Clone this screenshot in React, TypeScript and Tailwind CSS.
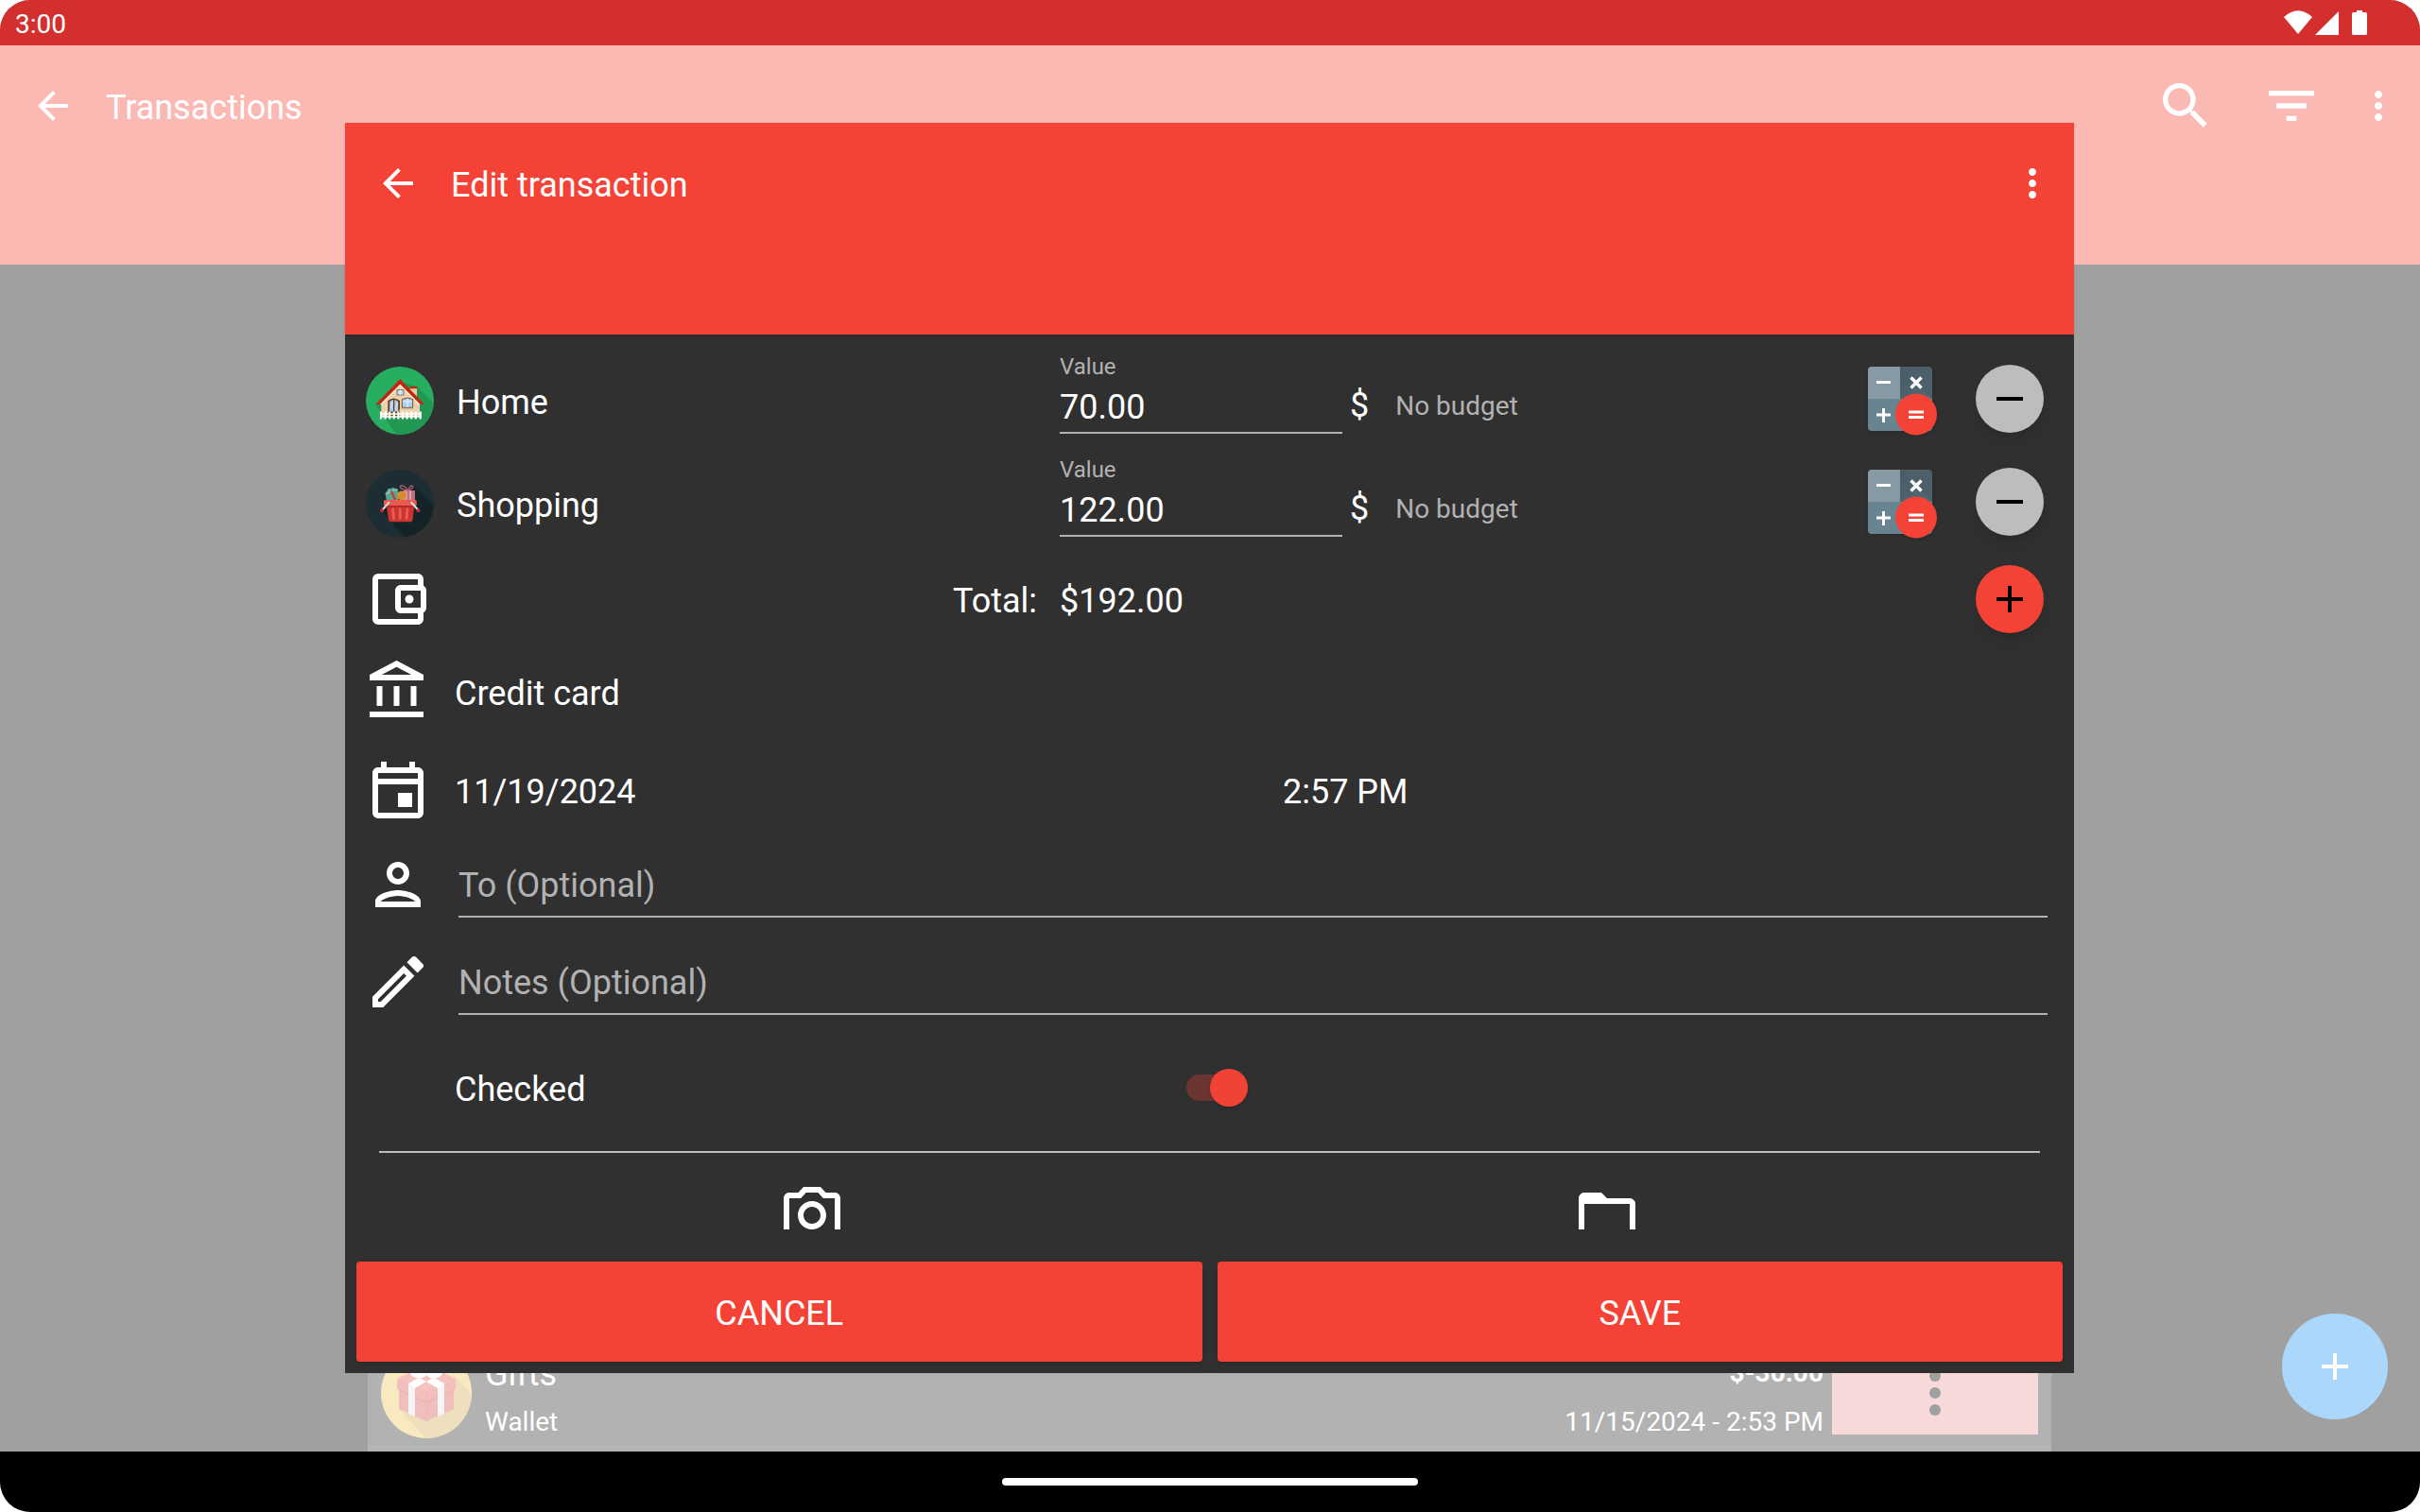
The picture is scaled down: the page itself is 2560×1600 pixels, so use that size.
import { useState } from "react";
import type { ReactNode } from "react";
import {
  MdArrowBack,
  MdFilterList,
  MdFolderOpen,
  MdMoreVert,
  MdOutlineAccountBalance,
  MdOutlineAccountBalanceWallet,
  MdOutlineEdit,
  MdOutlineEvent,
  MdOutlinePerson,
  MdOutlinePhotoCamera,
  MdSearch,
} from "react-icons/md";

function HouseIcon() {
  return (
    <svg viewBox="0 0 72 72" className="size-[72px] shrink-0" aria-hidden="true">
      <defs>
        <clipPath id="house-clip">
          <circle cx="36" cy="36" r="36" />
        </clipPath>
      </defs>
      <circle cx="36" cy="36" r="36" fill="#27ae60" />
      <path d="M54 21L76 43V76H35L10.500 40.500L36 16Z" fill="#229653" clipPath="url(#house-clip)" />
      <rect x="47" y="22" width="7" height="14" fill="#e3c9a4" />
      <rect x="46.500" y="21" width="8" height="2.200" fill="#c0280f" />
      <path d="M16.300 37L36.300 17L57 37V53H16.300Z" fill="#ead2ae" />
      <path d="M36.300 13L62 40H57.500L36.300 18.800L15 40H10.300Z" fill="#c0280f" />
      <path d="M36.300 18.800L57.500 40H55.500L36.300 21L17 40H15Z" fill="#f6ead6" />
      <rect x="33" y="24.500" width="7" height="5.500" fill="#bcdcf7" stroke="#7d5a3a" strokeWidth="0.800" />
      <path d="M36.500 24.500V30" stroke="#fff" strokeWidth="0.700" />
      <path d="M38.300 43.300V34.500Q44 31.500 49.700 34.500V43.300Z" fill="#a9cff2" stroke="#7a4a25" strokeWidth="1" />
      <path d="M44 33.500V43M38.800 37H49.200" stroke="#fff" strokeWidth="0.700" />
      <path d="M37.500 44.300H50.500" stroke="#cdb18a" strokeWidth="1" />
      <path d="M23.300 53V36Q29.700 31 36 36V53Z" fill="#6b3d17" />
      <path d="M25.200 47.500V37Q27 35.300 29 35V47.500ZM30.300 47.500V35Q32.500 35.300 34.200 37V47.500Z" fill="#a9cff2" />
      <path d="M26 44L28.500 38M31.200 45L33.600 38" stroke="#dcecfb" strokeWidth="0.900" />
      <circle cx="35" cy="46.500" r="0.800" fill="#f0c419" />
      <path d="M15 50H58.700M15 53H58.700" stroke="#fff" strokeWidth="1.400" />
      <path
        d="M16 55.500V47.500M20.600 55.500V47.500M25.200 55.500V47.500M29.800 55.500V47.500M34.400 55.500V47.500M39 55.500V47.500M43.600 55.500V47.500M48.200 55.500V47.500M52.800 55.500V47.500M57.700 55.500V47.500"
        stroke="#fff"
        strokeWidth="2.200"
      />
    </svg>
  );
}

function BasketIcon() {
  return (
    <svg viewBox="0 0 72 72" className="size-[72px] shrink-0" aria-hidden="true">
      <defs>
        <clipPath id="basket-clip">
          <circle cx="36" cy="36" r="36" />
        </clipPath>
      </defs>
      <circle cx="36" cy="36" r="36" fill="#1c2e33" />
      <path d="M51 18L76 43V76H45L17 44L30 30Z" fill="#142326" clipPath="url(#basket-clip)" />
      <path d="M20.500 25L24 20.500L29 19L33.500 21L35 26L34 33H22Z" fill="#5aa394" />
      <path d="M21 26L25 24L24 20.500M28 22L33.500 21" stroke="#8cc9bb" strokeWidth="1.400" fill="none" />
      <path d="M27 23L31 32" stroke="#c9393a" strokeWidth="2.200" />
      <rect x="40" y="22" width="12" height="11" fill="#b9707f" />
      <rect x="40" y="22" width="4" height="11" fill="#d9939d" />
      <path d="M47 22V33" stroke="#e9aeb5" strokeWidth="1.600" />
      <circle cx="37.800" cy="27.500" r="5" fill="#d68b2d" />
      <path d="M44.500 22C40 21.500 35.500 19.500 36.500 17.500S43 18 44.500 22C46 18 48.500 16 49.500 17.500S48 21.500 44.500 22" fill="none" stroke="#b75a72" strokeWidth="1.300" />
      <path d="M21.500 36H51.500L49.500 53Q49.200 55.300 47 55.300H26.500Q24.300 55.300 24 53Z" fill="#cc3333" />
      <path d="M19 33.500Q19 32 20.500 32H52Q53.700 32 53.700 33.500V38H19Z" fill="#e95b4f" />
      <path d="M21.500 38H51.300V39.600H21.700Z" fill="#a92629" />
      <path d="M28.500 42L29.500 51.500M36.200 42V51.500M44 42L43 51.500" stroke="#ea5d50" strokeWidth="2.800" strokeLinecap="round" />
      <path d="M24.300 34.800L17.500 42.500M48.300 34.800L55.200 42.500" stroke="#dfe3e3" strokeWidth="2" strokeLinecap="round" />
      <circle cx="17" cy="43.200" r="1.900" fill="#c9302f" />
      <circle cx="55.500" cy="43.200" r="1.900" fill="#c9302f" />
    </svg>
  );
}

function GiftIcon() {
  return (
    <svg viewBox="0 0 96 96" className="size-24 shrink-0" aria-hidden="true">
      <defs>
        <clipPath id="gift-clip">
          <circle cx="48" cy="48" r="48" />
        </clipPath>
      </defs>
      <circle cx="48" cy="48" r="48" fill="#f9e9c1" />
      <path d="M79 31L110 65V110H60L19 65L48 40Z" fill="#eee0bf" clipPath="url(#gift-clip)" />
      <path d="M19 40L48 52L77 40V65L48 78L19 65Z" fill="#f0bfbd" />
      <path d="M17 33L48 18L79 33V44L48 57L17 44Z" fill="#f6c2bf" />
      <path d="M17 33L48 47L79 33V44L48 57L17 44Z" fill="#f3bfbc" />
      <path d="M19 45L48 58L77 45" stroke="#e9b0ae" strokeWidth="1.200" fill="none" />
      <path d="M48 46V78" stroke="#ecb8b6" strokeWidth="1" />
      <path d="M29 38L36 42V73L29 70ZM60 42L67 38V70L60 73Z" fill="#f6f6f6" />
      <path d="M29 38L60 21L67 25L36 43ZM67 38L36 21L29 25L60 43Z" fill="#fff" />
      <ellipse cx="40" cy="25" rx="8" ry="6" fill="none" stroke="#fff" strokeWidth="3" />
      <ellipse cx="56" cy="25" rx="8" ry="6" fill="none" stroke="#fff" strokeWidth="3" />
    </svg>
  );
}

function CalculatorIcon() {
  return (
    <svg viewBox="0 0 76 76" className="size-[76px] drop-shadow-sm" aria-hidden="true">
      <defs>
        <clipPath id="calc-clip">
          <rect width="68" height="68" rx="4" />
        </clipPath>
        <linearGradient id="calc-fade" x1="0" y1="0" x2="1" y2="1">
          <stop offset="0" stopColor="#455a64" />
          <stop offset="1" stopColor="#546b77" />
        </linearGradient>
      </defs>
      <g clipPath="url(#calc-clip)">
        <rect width="34" height="34" fill="#8799a3" />
        <rect x="34" width="34" height="34" fill="#4d606a" />
        <path d="M34 0L68 34H34Z" fill="url(#calc-fade)" />
        <rect y="34" width="68" height="34" fill="#678490" />
      </g>
      <path d="M9 16.500H24M9 51H24M16.500 44V59" stroke="#fff" strokeWidth="3" />
      <path d="M45.500 11.500L56.500 22.500M56.500 11.500L45.500 22.500" stroke="#fff" strokeWidth="3.400" />
      <circle cx="51" cy="50.500" r="22" fill="#f44336" />
      <path d="M43 48H59M43 53.500H59" stroke="#fff" strokeWidth="3" />
    </svg>
  );
}

function PlusMinus({ plus = false }: { plus?: boolean }) {
  return (
    <svg viewBox="0 0 28 28" className="size-7" aria-hidden="true">
      <path d={plus ? "M0 14H28M14 0V28" : "M0 14H28"} stroke="currentColor" strokeWidth="4" />
    </svg>
  );
}

function StatusBar() {
  return (
    <div className="flex h-12 shrink-0 items-center justify-between bg-[#d32f2f] pr-14 pl-4">
      <time className="pt-1 text-[28px] leading-8">3:00</time>
      <div className="flex items-center" aria-hidden="true">
        <svg viewBox="0 0 30 26" className="mr-[3px] h-[26px] w-[30px]" fill="currentColor">
          <path d="M0 7Q15 -6.500 30 7L15 25Z" />
        </svg>
        <svg viewBox="0 0 25 26" className="mr-[14px] h-[26px] w-[25px]" fill="currentColor">
          <path d="M25 1V26H0Z" />
        </svg>
        <svg viewBox="0 0 16 26" className="h-[26px] w-4" fill="currentColor">
          <path d="M5 0h6v2h3.500A1.500 1.500 0 0 1 16 3.500v21a1.500 1.500 0 0 1-1.500 1.500h-13A1.500 1.500 0 0 1 0 24.500v-21A1.500 1.500 0 0 1 1.500 2H5z" />
        </svg>
      </div>
    </div>
  );
}

function AppBar() {
  return (
    <header className="flex h-[232px] shrink-0 items-start bg-[#fbb9b4] pt-8">
      <div className="flex h-16 w-full items-center pr-5 pl-8">
        <button aria-label="Back" className="mr-8">
          <MdArrowBack className="size-12" />
        </button>
        <h1 className="flex-1 pt-1 text-4xl">Transactions</h1>
        <button aria-label="Search" className="mr-12">
          <MdSearch className="size-16" />
        </button>
        <button aria-label="Filter" className="mr-9">
          <MdFilterList className="size-16" />
        </button>
        <button aria-label="More options">
          <MdMoreVert className="size-12" />
        </button>
      </div>
    </header>
  );
}

function TransactionCard() {
  return (
    <article className="mr-[390px] ml-[389px] bg-[#b2b2b2]">
      <div className="flex items-end border-b-2 border-[#b7b7b7] pr-[14px] pb-2 pl-[14px]">
        <GiftIcon />
        <div className="ml-[14px] flex-1">
          <p className="text-4xl">Gifts</p>
          <p className="mt-[14px] text-[28px] leading-[34px]">Wallet</p>
        </div>
        <div className="text-right">
          <p className="text-[28px] leading-[34px] font-bold">$-30.00</p>
          <p className="mt-[18px] text-[28px] leading-[34px]">11/15/2024 - 2:53 PM</p>
        </div>
        <button
          aria-label="Transaction options"
          className="mb-1 ml-[9px] flex h-24 w-[218px] items-end justify-center bg-[#f8d9da] pb-5 text-[#a0a0a0]"
        >
          <svg viewBox="0 0 12 48" className="h-12 w-3" fill="currentColor">
            <circle cx="6" cy="6" r="6" />
            <circle cx="6" cy="24" r="6" />
            <circle cx="6" cy="42" r="6" />
          </svg>
        </button>
      </div>
      <div className="h-1" />
    </article>
  );
}

type Category = { id: string; name: string; value: string; icon: ReactNode };

const categories: Category[] = [
  { id: "home", name: "Home", value: "70.00", icon: <HouseIcon /> },
  { id: "shopping", name: "Shopping", value: "122.00", icon: <BasketIcon /> },
];

function CategoryRow({ id, name, value, icon }: Category) {
  return (
    <div className="mb-[19px] grid h-[90px] grid-cols-[734fr_299px_556fr_114px_72px] items-end pr-8 pl-[22px]">
      <div className="flex items-center gap-6">
        {icon}
        <span className="pt-1 text-4xl">{name}</span>
      </div>
      <div className="self-start">
        <label htmlFor={id} className="block h-[34px] text-2xl leading-9 text-[#b2b2b2]">
          Value
        </label>
        <input
          id={id}
          defaultValue={value}
          className="block h-[55px] w-full border-b-2 border-[#b2b2b2] bg-transparent text-4xl outline-none"
        />
      </div>
      <div className="mb-1 flex h-[54px] items-center gap-7 pl-2">
        <span className="text-4xl">$</span>
        <button type="button" className="pt-[2px] text-[28px] leading-9 text-[#b2b2b2]">
          No budget
        </button>
      </div>
      <button type="button" aria-label={`Calculate ${name}`} className="-mb-1 justify-self-start">
        <CalculatorIcon />
      </button>
      <button
        type="button"
        aria-label={`Remove ${name}`}
        className="mb-[2px] flex size-[72px] items-center justify-center rounded-full bg-[#bdbdbd] text-black shadow-lg"
      >
        <PlusMinus />
      </button>
    </div>
  );
}

function EditDialog() {
  const [checked, setChecked] = useState(true);
  return (
    <section role="dialog" aria-label="Edit transaction" className="bg-[#303030]">
      <header className="h-56 bg-[#f44336] pt-8 shadow-sm">
        <div className="flex h-16 items-center pr-5 pl-8">
          <button aria-label="Back" className="mr-8">
            <MdArrowBack className="size-12" />
          </button>
          <h2 className="flex-1 pt-1 text-4xl">Edit transaction</h2>
          <button aria-label="More options">
            <MdMoreVert className="size-12" />
          </button>
        </div>
      </header>

      <form className="pt-4" onSubmit={(e) => e.preventDefault()}>
        {categories.map((c) => (
          <CategoryRow key={c.id} {...c} />
        ))}

        <div className="mt-[29px] grid grid-cols-[736fr_969fr_72px] items-center pr-8 pl-5">
          <div className="flex items-center justify-between pr-6">
            <MdOutlineAccountBalanceWallet className="size-[72px]" />
            <span className="pt-1 text-4xl">Total:</span>
          </div>
          <output className="pt-1 text-4xl">$192.00</output>
          <button
            type="button"
            aria-label="Add category"
            className="flex size-[72px] items-center justify-center rounded-full bg-[#f44336] text-black shadow-lg"
          >
            <PlusMinus plus />
          </button>
        </div>

        <div className="mt-[26px] flex items-center gap-6 px-5">
          <MdOutlineAccountBalance className="size-[72px]" />
          <button type="button" className="pt-1 text-4xl">
            Credit card
          </button>
        </div>

        <div className="mt-8 flex items-center gap-6 px-5">
          <MdOutlineEvent className="size-[72px] shrink-0" />
          <div className="grid flex-1 grid-cols-[876fr_817fr] pt-1 text-4xl">
            <button type="button" className="text-left">
              11/19/2024
            </button>
            <button type="button" className="text-left">
              2:57 PM
            </button>
          </div>
        </div>

        <div className="mt-7 flex gap-7 pr-7 pl-5">
          <MdOutlinePerson className="size-[72px] shrink-0" />
          <input
            aria-label="To"
            placeholder="To (Optional)"
            className="h-[71px] flex-1 border-b-2 border-[#b2b2b2] bg-transparent pt-1 text-4xl outline-none placeholder:text-[#b2b2b2]"
          />
        </div>

        <div className="mt-[31px] flex gap-7 pr-7 pl-5">
          <MdOutlineEdit className="size-[72px] shrink-0" />
          <input
            aria-label="Notes"
            placeholder="Notes (Optional)"
            className="h-[71px] flex-1 border-b-2 border-[#b2b2b2] bg-transparent pt-1 text-4xl outline-none placeholder:text-[#b2b2b2]"
          />
        </div>

        <div className="mt-10 grid h-[72px] grid-cols-[774fr_939fr] items-center pl-[116px]">
          <label htmlFor="checked" className="pt-1 text-4xl">
            Checked
          </label>
          <input
            id="checked"
            type="checkbox"
            role="switch"
            checked={checked}
            onChange={(e) => setChecked(e.target.checked)}
            className="relative h-7 w-14 appearance-none rounded-full bg-[#757575] before:absolute before:-top-[6px] before:-left-[9px] before:size-10 before:rounded-full before:bg-[#bdbdbd] before:shadow-md checked:bg-[#6b3531] checked:before:left-[25px] checked:before:bg-[#f04235]"
          />
        </div>

        <hr className="mx-9 mt-[31px] border-t-2 border-[#bdbdbd]" />

        <div className="mx-[74px] mt-[30px] grid h-[51px] grid-cols-2 justify-items-center overflow-hidden">
          <button type="button" aria-label="Take photo" className="self-start">
            <MdOutlinePhotoCamera className="size-[72px]" />
          </button>
          <button type="button" aria-label="Choose file" className="self-start">
            <MdFolderOpen className="size-[72px]" />
          </button>
        </div>

        <div className="mt-[34px] grid grid-cols-2 gap-4 px-3 pb-3 text-4xl">
          <button type="button" className="h-[106px] rounded-sm bg-[#f44336] pt-1 shadow-md">
            CANCEL
          </button>
          <button type="submit" className="h-[106px] rounded-sm bg-[#f44336] pt-1 shadow-md">
            SAVE
          </button>
        </div>
      </form>
    </section>
  );
}

export default function App() {
  return (
    <div className="min-h-screen bg-white font-['Roboto',sans-serif] text-white">
      <div className="relative flex min-h-screen flex-col overflow-hidden rounded-[32px] bg-[#a0a0a0]">
        <StatusBar />
        <AppBar />
        <main className="flex flex-1 flex-col justify-end">
          <TransactionCard />
        </main>
        <nav className="flex h-16 shrink-0 items-center justify-center bg-black">
          <button aria-label="Home screen" className="h-2 w-[440px] rounded-full bg-white" />
        </nav>
        <button
          aria-label="Add transaction"
          className="absolute right-[34px] bottom-[98px] flex size-28 items-center justify-center rounded-full bg-[#abd7fb]"
        >
          <PlusMinus plus />
        </button>
        <div className="absolute inset-x-0 top-0 pt-[130px] pr-[366px] pl-[365px]">
          <EditDialog />
        </div>
      </div>
    </div>
  );
}
